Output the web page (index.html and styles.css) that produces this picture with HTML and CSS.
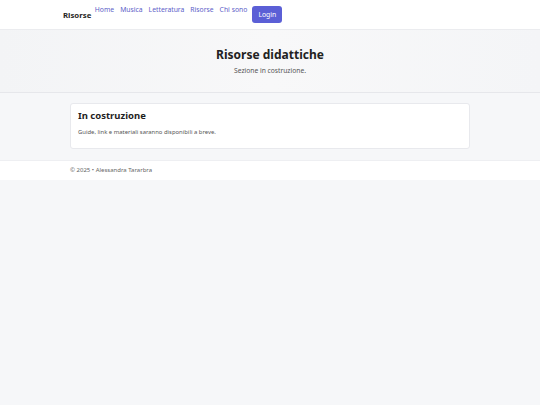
FILE: index.html
```html
<!DOCTYPE html>
<html lang="it">
<head>
<meta charset="utf-8">
<title>Risorse didattiche</title>
<link rel="stylesheet" href="styles.css">
</head>
<body>
<header class="topbar">
  <nav class="nav">
    <a class="brand" href="#">Risorse</a>
    <ul class="links">
      <li><a href="#">Home</a></li>
      <li><a href="#">Musica</a></li>
      <li><a href="#">Letteratura</a></li>
      <li><a href="#">Risorse</a></li>
      <li><a href="#">Chi sono</a></li>
    </ul>
    <button class="login">Login</button>
  </nav>
</header>
<section class="hero">
  <h1 class="hero-title">Risorse didattiche</h1>
  <p class="hero-sub">Sezione in costruzione.</p>
</section>
<main class="main">
  <div class="card">
    <h2 class="card-title">In costruzione</h2>
    <p class="card-text">Guide, link e materiali saranno disponibili a breve.</p>
  </div>
</main>
<footer class="footer">
  <div class="footer-inner">© 2025 • Alessandra Tararbra</div>
</footer>
</body>
</html>
```
FILE: styles.css
```css
* { box-sizing: border-box; }
html, body { margin: 0; padding: 0; }
body {
  background: #f6f7f9;
  font-family: "Noto Sans", "Open Sans", sans-serif;
  color: #222;
}
.topbar {
  background: #fff;
  height: 30px;
  border-bottom: 1px solid #ebecef;
}
.nav {
  width: 414px;
  margin: 0 auto;
  display: flex;
  align-items: flex-start;
  height: 29px;
}
.brand {
  font-weight: 700;
  font-size: 7.8px;
  color: #1f1f24;
  text-decoration: none;
  line-height: 10px;
  margin-top: 10px;
  margin-right: 3.5px;
}
.links {
  list-style: none;
  margin: 5px 0 0;
  padding: 0;
  display: flex;
  gap: 6px;
  font-size: 6.8px;
  line-height: 10px;
}
.links a {
  color: #5c60c8;
  text-decoration: none;
}
.login {
  margin-left: 5px;
  margin-top: 6px;
  width: 30px;
  height: 17px;
  border: none;
  border-radius: 3px;
  background: #5b5fd6;
  color: #fff;
  font-family: inherit;
  font-size: 6.8px;
  padding: 0;
}
.hero {
  height: 63px;
  background: linear-gradient(90deg, #f3f4f6 0%, #f8f8f9 50%, #f4f5f7 100%);
  border-bottom: 1px solid #e6e7eb;
  text-align: center;
  padding-top: 17px;
}
.hero-title {
  margin: 0;
  font-size: 12px;
  line-height: 16px;
  font-weight: 700;
  color: #222;
}
.hero-sub {
  margin: 3px 0 0;
  font-size: 6.7px;
  line-height: 9px;
  color: #555;
}
.main {
  width: 400px;
  margin: 0 auto;
  padding: 10px 0 11px;
}
.card {
  background: #fff;
  border: 1px solid #e8e9ed;
  border-radius: 3px;
  padding: 6px 7px 12px;
}
.card-title {
  margin: 0;
  font-size: 9.5px;
  line-height: 12px;
  font-weight: 700;
  color: #1e1e22;
}
.card-text {
  margin: 6px 0 0;
  font-size: 5.9px;
  line-height: 8px;
  color: #555;
}
.footer {
  background: #fff;
  height: 20px;
  border-top: 1px solid #eeeff2;
}
.footer-inner {
  width: 400px;
  margin: 0 auto;
  font-size: 6px;
  line-height: 19px;
  color: #666;
}
```
